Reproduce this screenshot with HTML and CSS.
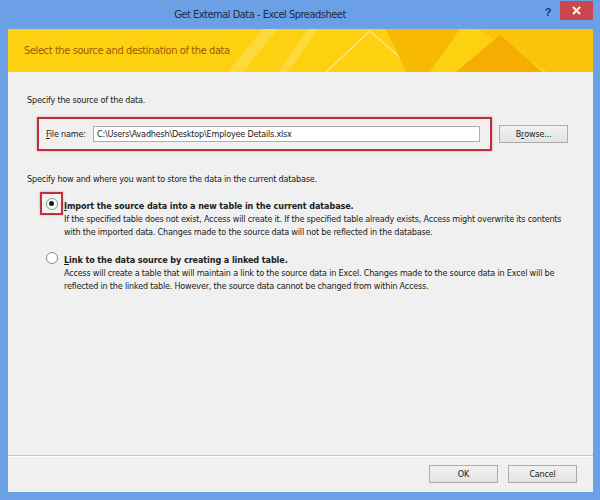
FILE: index.html
```html
<!DOCTYPE html>
<html>
<head>
<meta charset="utf-8">
<link rel="stylesheet" href="styles.css">
</head>
<body>
<div class="window">
  <div class="titlebar">
    <span class="title">Get External Data - Excel Spreadsheet</span>
    <span class="help">?</span>
    <span class="close"><svg width="9" height="9" viewBox="0 0 9 9"><path d="M1 1L8 8M8 1L1 8" stroke="#fff" stroke-width="1.8"/></svg></span>
  </div>
  <div class="client">
    <div class="banner">
      <svg class="banner-art" viewBox="0 0 585 43" preserveAspectRatio="none">
        <polygon points="255,0 270,0 235,43 220,43" fill="#ffe680" opacity="0.4"/>
        <polygon points="300,0 310,0 280,43 270,43" fill="#ffe680" opacity="0.4"/>
        <polyline points="318,43 362,2 408,43" fill="none" stroke="#ffe9a0" stroke-width="1.5" opacity="0.8"/>
        <polygon points="378,0 452,0 422,43 398,43" fill="#f7b500" opacity="0.85"/>
        <polygon points="470,0 585,0 585,43 540,43" fill="#fbc40a"/>
        <polygon points="448,43 492,6 534,43" fill="#f5a900" opacity="0.9"/>
      </svg>
      <span class="banner-text">Select the source and destination of the data</span>
    </div>
    <div class="body">
      <p class="lead">Specify the source of the data.</p>
      <div class="file-row">
        <div class="file-box">
          <span class="file-label"><u>F</u>ile name:</span>
          <div class="input">C:\Users\Avadhesh\Desktop\Employee Details.xlsx</div>
        </div>
        <span class="btn browse">B<u>r</u>owse...</span>
      </div>
      <p class="lead lead-second">Specify how and where you want to store the data in the current database.</p>
      <div class="option">
        <div class="radio-wrap marked"><span class="radio checked"></span></div>
        <div class="opt-text">
          <div class="opt-title"><u>I</u>mport the source data into a new table in the current database.</div>
          <div class="opt-desc">If the specified table does not exist, Access will create it. If the specified table already exists, Access might overwrite its contents<br>with the imported data. Changes made to the source data will not be reflected in the database.</div>
        </div>
      </div>
      <div class="option option-second">
        <div class="radio-wrap"><span class="radio"></span></div>
        <div class="opt-text">
          <div class="opt-title"><u>L</u>ink to the data source by creating a linked table.</div>
          <div class="opt-desc">Access will create a table that will maintain a link to the source data in Excel. Changes made to the source data in Excel will be<br>reflected in the linked table. However, the source data cannot be changed from within Access.</div>
        </div>
      </div>
    </div>
    <div class="footer">
      <span class="btn">OK</span>
      <span class="btn">Cancel</span>
    </div>
  </div>
</div>
</body>
</html>
```
FILE: styles.css
```css
* { box-sizing: border-box; }
html, body { margin: 0; padding: 0; }
body {
  width: 600px;
  height: 500px;
  overflow: hidden;
  font-family: "DejaVu Sans Condensed", "Liberation Sans", sans-serif;
  color: #202020;
}
.window {
  width: 600px;
  height: 500px;
  background: #6b9fe6;
  padding: 0 7px 8px 8px;
  display: flex;
  flex-direction: column;
}
.titlebar {
  height: 29px;
  display: flex;
  align-items: flex-start;
  flex-shrink: 0;
}
.title {
  flex: 1;
  text-align: center;
  padding-right: 28px;
  font-size: 11px;
  letter-spacing: -0.5px;
  line-height: 29px;
  color: #1d2b45;
}
.help {
  width: 16px;
  margin-right: 4px;
  font-family: "Liberation Sans", sans-serif;
  font-weight: bold;
  font-size: 11px;
  line-height: 24px;
  color: #1a3566;
  text-align: center;
}
.close {
  width: 33px;
  height: 19px;
  margin-top: 1px;
  background: #c9484f;
  display: flex;
  align-items: center;
  justify-content: center;
}
.client {
  flex: 1;
  background: #f0f0f0;
  display: flex;
  flex-direction: column;
}
.banner {
  position: relative;
  height: 43px;
  background: #fdd10f;
  display: flex;
  align-items: center;
  padding-left: 16px;
  flex-shrink: 0;
}
.banner-art {
  position: absolute;
  left: 0;
  top: 0;
  width: 100%;
  height: 100%;
}
.banner-text {
  position: relative;
  font-size: 11px;
  letter-spacing: -0.4px;
  color: #9a5a05;
}
.body {
  padding: 22px 0 0 19px;
  font-size: 9px;
  letter-spacing: -0.2px;
}
.lead {
  margin: 0;
  line-height: 13px;
}
.file-row {
  margin: 10px 0 0 10px;
  display: flex;
  align-items: center;
}
.file-box {
  width: 455px;
  height: 34px;
  border: 2px solid #b8313d;
  box-shadow: 0 0 2px rgba(200, 60, 70, 0.5);
  display: flex;
  align-items: center;
  padding-left: 7px;
}
.file-label {
  width: 47px;
}
.input {
  width: 387px;
  height: 16px;
  background: #fff;
  border: 1px solid #abadb3;
  padding-left: 3px;
  line-height: 14px;
}
.btn {
  width: 69px;
  height: 18px;
  border: 1px solid #acacac;
  background: linear-gradient(#f2f2f2, #e3e3e3);
  display: flex;
  align-items: center;
  justify-content: center;
  font-size: 9px;
  letter-spacing: -0.2px;
}
.browse {
  margin-left: 7px;
}
.lead-second {
  margin-top: 22px;
}
.option {
  display: flex;
  margin: 6px 0 0 13px;
}
.option-second {
  margin-top: 7px;
}
.radio-wrap {
  width: 23px;
  height: 23px;
  flex-shrink: 0;
  display: flex;
  align-items: center;
  justify-content: center;
}
.radio-wrap.marked {
  border: 2px solid #b8313d;
  box-shadow: 0 0 2px rgba(200, 60, 70, 0.5);
}
.radio {
  width: 12px;
  height: 12px;
  border-radius: 50%;
  border: 1px solid #8c8c8c;
  background: #fff;
  display: flex;
  align-items: center;
  justify-content: center;
}
.radio.checked::after {
  content: "";
  width: 5px;
  height: 5px;
  border-radius: 50%;
  background: #1a1a1a;
}
.opt-text {
  padding: 8px 0 0 1px;
  line-height: 13px;
  white-space: nowrap;
}
.opt-title {
  font-weight: bold;
  font-size: 9px;
  letter-spacing: -0.1px;
}
.opt-desc {
  font-size: 9px;
}
.footer {
  margin-top: auto;
  height: 37px;
  border-top: 1px solid #c4c4c4;
  box-shadow: inset 0 1px 0 #ffffff;
  display: flex;
  justify-content: flex-end;
  gap: 10px;
  padding: 9px 16px 0 0;
}
```
